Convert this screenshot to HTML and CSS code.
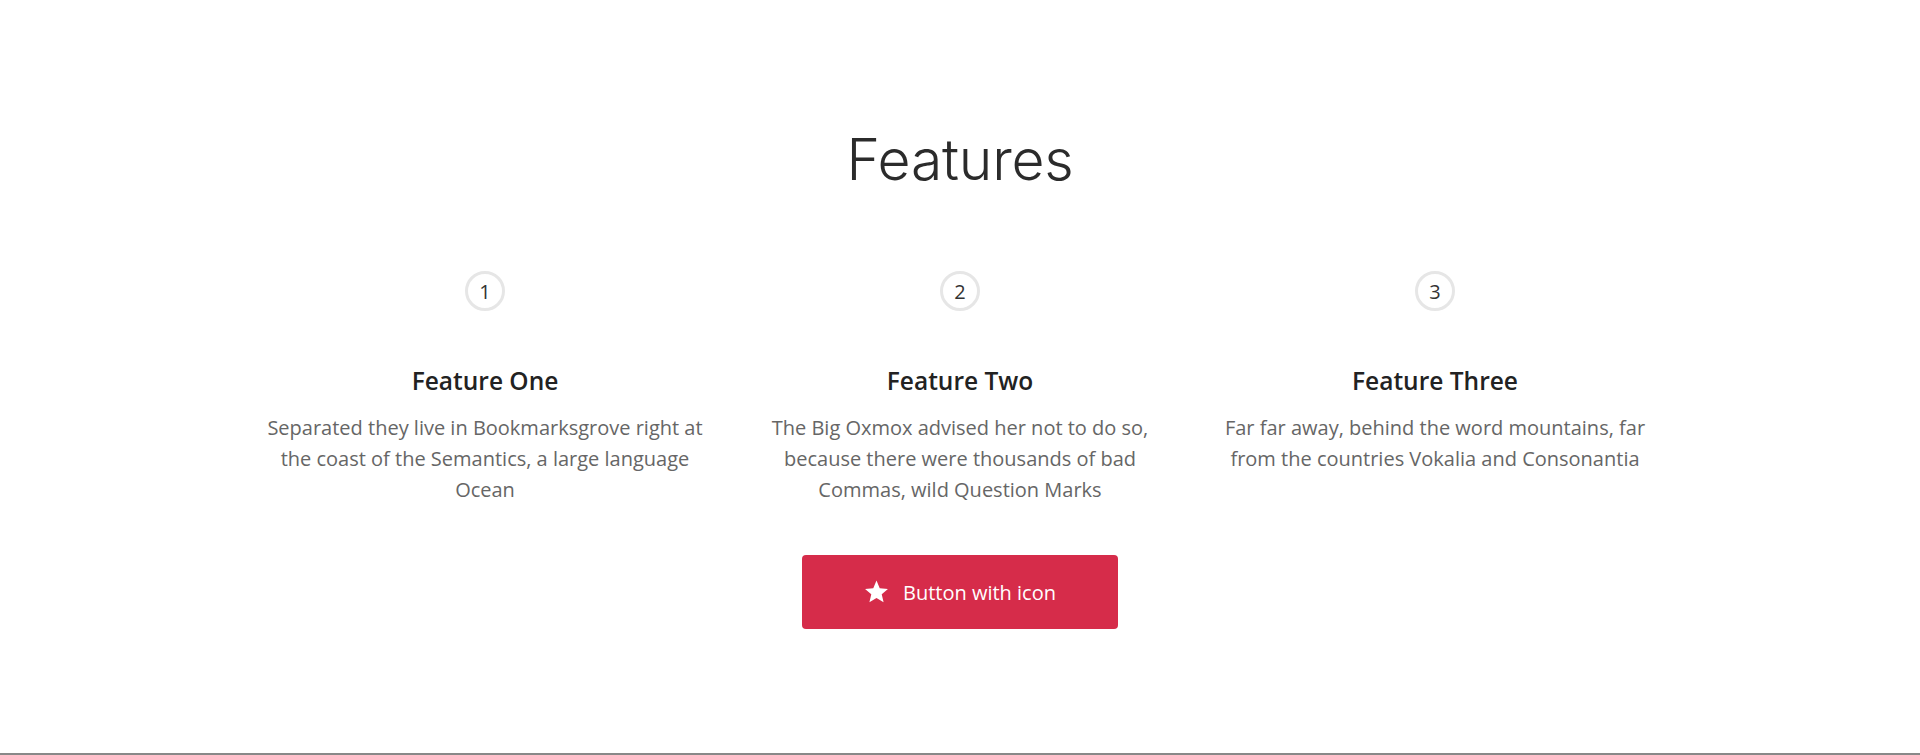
FILE: index.html
```html
<!DOCTYPE html>
<html>
<head>
    <title>Features</title>
    <link rel="stylesheet" href="styles.css">
</head>
<body>
    <section class="features">
        <h1 class="features-title">Features</h1>

        <div class="feature-grid">
            <div class="feature">
                <span class="feature-num">1</span>
                <h3>Feature One</h3>
                <p>Separated they live in Bookmarksgrove right at the coast of the Semantics, a large language Ocean</p>
            </div>
            <div class="feature">
                <span class="feature-num">2</span>
                <h3>Feature Two</h3>
                <p>The Big Oxmox advised her not to do so, because there were thousands of bad Commas, wild Question Marks</p>
            </div>
            <div class="feature">
                <span class="feature-num">3</span>
                <h3>Feature Three</h3>
                <p>Far far away, behind the word mountains, far from the countries Vokalia and Consonantia</p>
            </div>
        </div>

        <a class="btn-icon" href="#">
            <svg width="25" height="24" viewBox="0 0 24 23"><path d="M12 0.5l3.1 7.3 7.9 0.7-6 5.2 1.8 7.7L12 17.3l-6.8 4.1 1.8-7.7-6-5.2 7.9-0.7z" fill="#fff"/></svg>
            <span>Button with icon</span>
        </a>
    </section>
</body>
</html>
```

FILE: styles.css
```css
body { margin: 0; padding: 0; background: #fff; font-family: 'Open Sans', sans-serif; color: #222; }

.features {
    height: 755px;
    box-sizing: border-box;
    border-bottom: 2px solid #888;
    padding-top: 125px;
    text-align: center;
}

.features-title {
    margin: 0;
    font-family: 'Inter', sans-serif;
    font-weight: 300;
    font-size: 57px;
    line-height: 70px;
    color: #2b2b2b;
    letter-spacing: -0.2px;
}

.feature-grid {
    display: grid;
    grid-template-columns: repeat(3, 475px);
    justify-content: center;
    margin-top: 76px;
}

.feature { padding: 0 18px; }

.feature-num {
    display: inline-flex;
    align-items: center;
    justify-content: center;
    width: 34px;
    height: 34px;
    border: 3px solid #e6e6e6;
    border-radius: 50%;
    font-size: 20px;
    font-weight: 400;
    color: #333;
}

.feature h3 {
    margin: 54px 0 0;
    font-size: 24.5px;
    font-weight: 600;
    line-height: 32px;
    color: #222;
}

.feature p {
    margin: 15px 0 0;
    font-size: 20px;
    line-height: 31px;
    color: #666;
}

.btn-icon {
    display: inline-flex;
    align-items: center;
    justify-content: center;
    gap: 14px;
    width: 316px;
    height: 74px;
    margin-top: 50px;
    box-sizing: border-box;
    border-radius: 4px;
    background: #d62c4a;
    color: #fff;
    font-size: 20px;
    text-decoration: none;
}
```
